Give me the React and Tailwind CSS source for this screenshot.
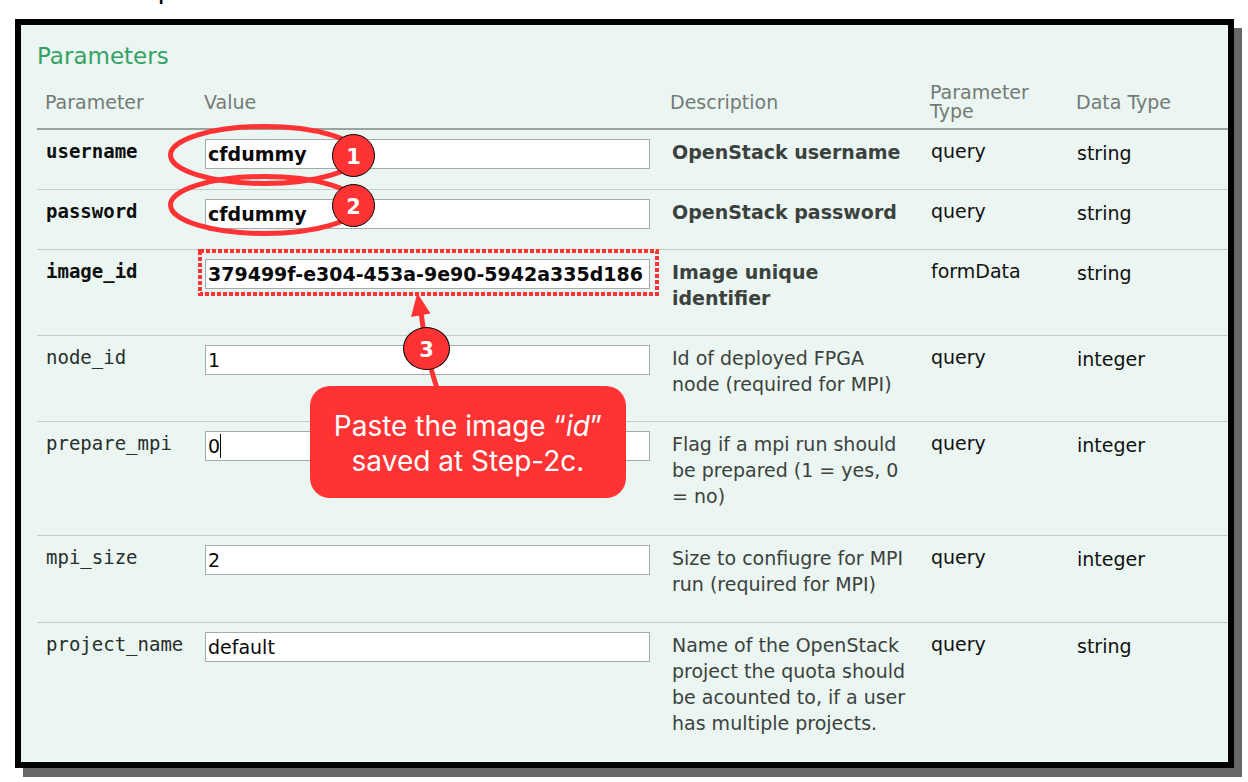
import React from "react";

const rows = [
  { name: "username", value: "cfdummy", description: "OpenStack username", kind: "query", type: "string", required: true, height: "h-[60px]", note: "first" },
  { name: "password", value: "cfdummy", description: "OpenStack password", kind: "query", type: "string", required: true, height: "h-[60px]", note: "second" },
  { name: "image_id", value: "379499f-e304-453a-9e90-5942a335d186", description: "Image unique identifier", kind: "formData", type: "string", required: true, height: "h-[86px]", note: "third" },
  { name: "node_id", value: "1", description: "Id of deployed FPGA node (required for MPI)", kind: "query", type: "integer", height: "h-[86px]" },
  { name: "prepare_mpi", value: "0", description: "Flag if a mpi run should be prepared (1 = yes, 0 = no)", kind: "query", type: "integer", height: "h-[114px]", caret: true },
  { name: "mpi_size", value: "2", description: "Size to confiugre for MPI run (required for MPI)", kind: "query", type: "integer", height: "h-[87px]" },
  { name: "project_name", value: "default", description: "Name of the OpenStack project the quota should be acounted to, if a user has multiple projects.", kind: "query", type: "string", height: "h-[139px]" },
];

const columns = [
  { label: "Parameter", width: "w-[159px]" },
  { label: "Value", width: "w-[466px]" },
  { label: "Description", width: "w-[260px]" },
  { label: "Parameter Type", width: "w-[146px]" },
  { label: "Data Type", width: "" },
];

function Badge({ number, className }) {
  return (
    <span
      className={`absolute flex h-[43px] items-center justify-center rounded-[50%] border border-black bg-[#ff3333] pt-[3px] font-['DejaVu_Sans',sans-serif] text-[21px] font-bold leading-none text-white ${className}`}
    >
      {number}
    </span>
  );
}

function CircledStep({ number, className }) {
  return (
    <div className={`pointer-events-none absolute left-0 z-10 ${className}`}>
      <svg className="absolute -left-10 -top-5 h-[72px] w-[210px]" viewBox="0 0 210 72" fill="none">
        <ellipse cx="99.5" cy="36" rx="94" ry="28.5" stroke="#ff3333" strokeWidth="5" />
      </svg>
      <Badge number={number} className="left-[127px] -top-[5px] w-[43px]" />
    </div>
  );
}

function PasteStep() {
  return (
    <div className="pointer-events-none absolute left-0 top-0 z-20">
      <svg className="absolute -left-[7px] -top-[10px] h-[140px] w-[462px]" viewBox="198 249 462 140" fill="none">
        <rect x="200" y="251" width="457" height="43" stroke="#ff3333" strokeWidth="4" strokeDasharray="4 2" />
        <path d="M437 388 Q427 360 421 312" stroke="#ff3333" strokeWidth="5" />
        <path d="M417.3 293 L430.5 313.5 L411 317 Z" fill="#ff3333" />
      </svg>
      <Badge number="3" className="left-[198px] top-[68px] w-[47px]" />
      <div className="absolute left-[105px] top-[127px] flex h-28 w-[316px] items-center justify-center rounded-[20px] bg-[#ff3333] pt-1 text-center font-['Inter',sans-serif] text-[28px] leading-[35px] text-white">
        <p>
          Paste the image “<em>id</em>”
          <br />
          saved at Step-2c.
        </p>
      </div>
    </div>
  );
}

function ParameterRow({ row, last }) {
  const line = last ? "" : "border-b border-[#c3cdc8]";
  const weight = row.required ? "font-bold" : "font-normal";
  return (
    <tr className={`${row.height} align-top text-[19px] leading-[26px] text-[#111]`}>
      <td className={`pl-[9px] pt-2 ${line}`}>
        <label
          htmlFor={row.name}
          className={`block font-['DejaVu_Sans_Mono',monospace] ${weight} ${row.required ? "text-[#0c0f0d]" : "text-[#28302c]"}`}
        >
          {row.name}
        </label>
      </td>
      <td className={`pl-[9px] pr-3 pt-[9px] ${line}`}>
        <div className="relative">
          <input
            id={row.name}
            type="text"
            defaultValue={row.value}
            className={`block h-[30px] w-full border border-[#a5aca8] bg-white px-[2px] text-[19px] text-[#0a0a0a] outline-none ${weight}`}
          />
          {row.caret && <span className="absolute left-[15px] top-[3px] h-6 w-px bg-black" />}
          {row.note === "first" && <CircledStep number="1" className="top-0" />}
          {row.note === "second" && <CircledStep number="2" className="-top-[10px]" />}
          {row.note === "third" && <PasteStep />}
        </div>
      </td>
      <td className={`pl-[10px] pr-2 pt-[9px] text-[#3b423e] ${weight} ${line}`}>{row.description}</td>
      <td className={`pl-[9px] pt-2 ${line}`}>{row.kind}</td>
      <td className={`pl-[9px] pt-[10px] ${line}`}>{row.type}</td>
    </tr>
  );
}

export default function App() {
  return (
    <div className="min-h-screen bg-white pb-[13px] font-['DejaVu_Sans',sans-serif]">
      <div className="h-[19px] overflow-hidden pl-[158px]">
        <p className="-mt-[25px] font-['Liberation_Sans',sans-serif] text-[28px] leading-7 text-black">p</p>
      </div>
      <main className="ml-[15px] mr-[14px] border-[6px] border-black bg-[#ebf5f1] pl-4 pt-[17px] shadow-[8px_9px_0_0_#666666]">
        <h1 className="text-[23px] leading-7 text-[#35a265]">Parameters</h1>
        <table className="w-full table-fixed border-separate border-spacing-0">
          <thead>
            <tr className="h-[60px] text-left text-[19px] leading-[19px] text-[#737b77]">
              {columns.map((column) => (
                <th
                  key={column.label}
                  scope="col"
                  className={`border-b-2 border-[#9aa39e] pb-[7px] pl-2 pt-[13px] font-normal ${column.width}`}
                >
                  {column.label}
                </th>
              ))}
            </tr>
          </thead>
          <tbody>
            {rows.map((row, index) => (
              <ParameterRow key={row.name} row={row} last={index === rows.length - 1} />
            ))}
          </tbody>
        </table>
      </main>
    </div>
  );
}
